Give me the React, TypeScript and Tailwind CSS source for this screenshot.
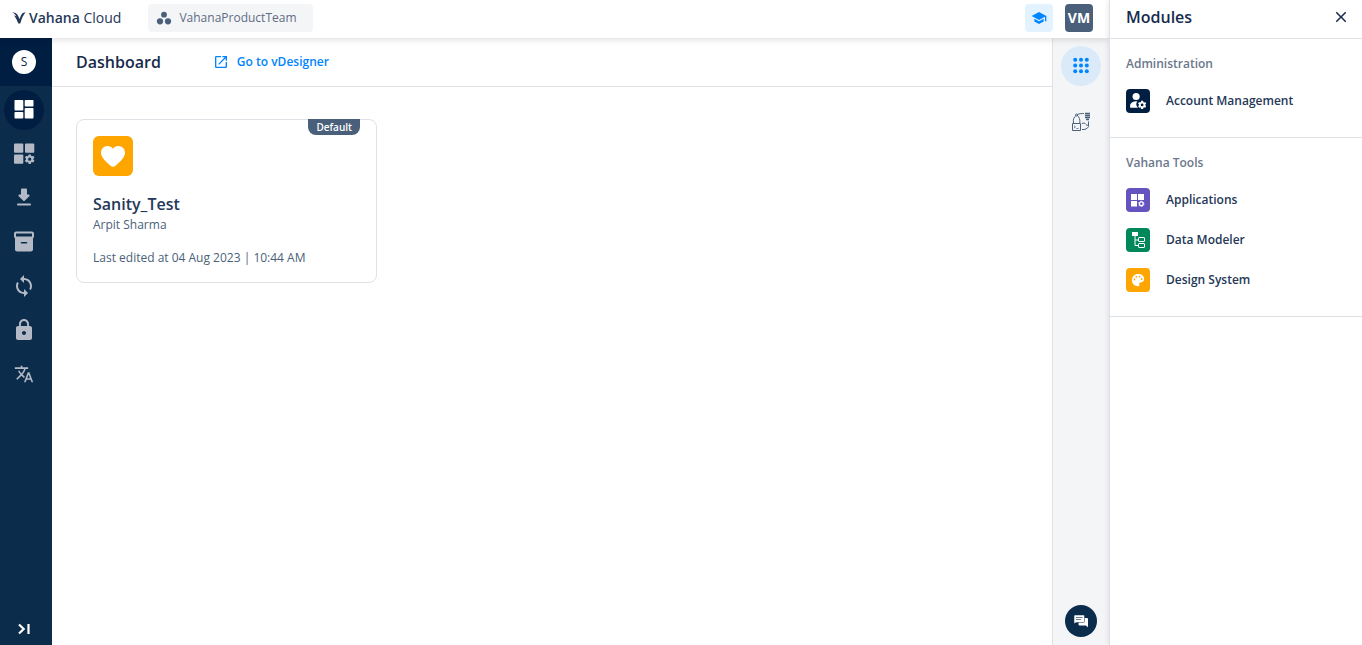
import React from "react";
import { MdClose, MdLock, MdOpenInNew, MdSchool, MdSync, MdTranslate } from "react-icons/md";

const gear =
  "M22.7 18.6l-1-.8a4 4 0 0 0 0-1.2l1-.8a.4.4 0 0 0 .1-.5l-1-1.7a.4.4 0 0 0-.5-.1l-1.2.5a4 4 0 0 0-1-.6l-.2-1.3a.4.4 0 0 0-.4-.3h-2a.4.4 0 0 0-.4.3l-.2 1.3a4 4 0 0 0-1 .6l-1.2-.5a.4.4 0 0 0-.5.1l-1 1.7a.4.4 0 0 0 .1.5l1 .8a4 4 0 0 0 0 1.2l-1 .8a.4.4 0 0 0-.1.5l1 1.7c.1.2.3.2.5.1l1.2-.5c.3.3.7.5 1 .6l.2 1.3c0 .2.2.3.4.3h2c.2 0 .4-.1.4-.3l.2-1.3c.4-.1.7-.3 1-.6l1.2.5c.2.1.4.1.5-.1l1-1.7a.4.4 0 0 0-.1-.5zM17.5 19a1.8 1.8 0 1 1 0-3.600 1.8 1.8 0 0 1 0 3.600z";

type IconProps = { className?: string };

function DashboardIcon({ className }: IconProps) {
  return (
    <svg viewBox="0 0 24 24" fill="currentColor" className={className} aria-hidden="true">
      <rect x="2.500" y="2" width="8.800" height="10.500" rx="0.800" />
      <rect x="12.700" y="2" width="8.800" height="6.500" rx="0.800" />
      <rect x="2.500" y="14" width="8.800" height="6.500" rx="0.800" />
      <rect x="12.700" y="10" width="8.800" height="10.500" rx="0.800" />
    </svg>
  );
}

function AppsGearIcon({ className }: IconProps) {
  return (
    <svg viewBox="0 0 24 24" fill="currentColor" className={className} aria-hidden="true">
      <rect x="2" y="1.500" width="9.300" height="9.300" rx="1" />
      <rect x="13" y="1.500" width="9.300" height="9.300" rx="1" />
      <rect x="2" y="12.500" width="9.300" height="9.300" rx="1" />
      <path fillRule="evenodd" d={gear} transform="translate(2.300 2) scale(0.88)" />
    </svg>
  );
}

function AppsTileIcon({ className }: IconProps) {
  return (
    <svg viewBox="0 0 16 16" fill="currentColor" className={className} aria-hidden="true">
      <path d="M1 2h6v6H1zM8 2h6v6H8zM1 9h6v5.500H1z" />
      <circle cx="11.300" cy="11.800" r="1.900" fill="none" stroke="currentColor" strokeWidth="1.300" />
      <circle cx="11.300" cy="11.800" r="2.700" fill="none" stroke="currentColor" strokeWidth="0.800" strokeDasharray="1.400 1.430" />
    </svg>
  );
}

function UserGearIcon({ className }: IconProps) {
  return (
    <svg viewBox="0 0 24 24" fill="currentColor" className={className} aria-hidden="true">
      <circle cx="9.500" cy="6" r="4.800" />
      <path d="M11 12.200c-5 0-9.500 2-9.500 5.600V21h10.500a7 7 0 0 1-1-8.800z" />
      <path fillRule="evenodd" d={gear} />
    </svg>
  );
}

function DownloadIcon({ className }: IconProps) {
  return (
    <svg viewBox="0 0 24 24" fill="currentColor" className={className} aria-hidden="true">
      <path d="M16.600 8.500H15V3.500a1 1 0 0 0-1-1h-4a1 1 0 0 0-1 1v5H7.400a1 1 0 0 0-.7 1.700l4.600 4.600a1 1 0 0 0 1.400 0l4.600-4.600a1 1 0 0 0-.7-1.700zM5 18.500a1 1 0 0 0 1 1h12a1 1 0 0 0 0-2H6a1 1 0 0 0-1 1z" />
    </svg>
  );
}

function ArchiveIcon({ className }: IconProps) {
  return (
    <svg viewBox="0 0 24 24" fill="currentColor" className={className} aria-hidden="true">
      <path
        fillRule="evenodd"
        d="M20 1.500H4c-1 0-2 .9-2 2v3c0 .7.4 1.300 1 1.700V19.500c0 1.100 1.100 2 2 2h14c.9 0 2-.9 2-2V8.200c.6-.4 1-1 1-1.700V3.500c0-1.100-1-2-2-2zm-5.500 12h-5a.8.8 0 0 1 0-1.600h5a.8.8 0 0 1 0 1.600zM20 6.500H4V3.500h16v3z"
      />
    </svg>
  );
}

function ExpandIcon({ className }: IconProps) {
  return (
    <svg viewBox="0 0 24 24" fill="none" stroke="currentColor" strokeWidth="2.200" className={className} aria-hidden="true">
      <path d="M7 7.500l4.700 4.500L7 16.500M16.500 7v10" />
    </svg>
  );
}

function LogoIcon({ className }: IconProps) {
  return (
    <svg viewBox="0 0 14 14" fill="currentColor" className={className} aria-hidden="true">
      <path d="M.3 1.300c2.200.2 4.200.7 5.300 2.600L7.700 8C8.400 5.500 9.200 3.300 10.200 2.400 11 1.700 12 1.400 13.600 1.200 11.300 3.800 9.600 7.500 8.300 12.600H6.300C5.300 9.800 3.800 7 2 4.300l2.400 1.200C3.200 3.500 2 2.300.3 1.300z" />
    </svg>
  );
}

function TeamIcon({ className }: IconProps) {
  return (
    <svg viewBox="0 0 16 16" fill="currentColor" className={className} aria-hidden="true">
      <circle cx="8" cy="4.700" r="2.900" />
      <circle cx="4" cy="11.300" r="3.100" />
      <circle cx="12" cy="11.300" r="3.100" />
    </svg>
  );
}

function DotsIcon({ className }: IconProps) {
  return (
    <svg viewBox="0 0 24 24" fill="currentColor" className={className} aria-hidden="true">
      {[5.700, 11.500, 17.300].map((cy) =>
        [6.200, 12, 17.800].map((cx) => <circle key={`${cx}-${cy}`} cx={cx} cy={cy} r="2" />),
      )}
    </svg>
  );
}

function HeartIcon({ className }: IconProps) {
  return (
    <svg viewBox="0 0 24 24" fill="currentColor" className={className} aria-hidden="true">
      <path d="M12 4.800C10.700 2.800 8.700 1.900 6.600 1.900 3 1.900 0 4.700 0 8.500c0 5.200 5.500 9.700 9.800 13.400 1.300 1.100 3.100 1.100 4.400 0C18.500 18.200 24 13.700 24 8.500c0-3.800-3-6.600-6.600-6.600-2.100 0-4.100.9-5.400 2.900z" />
    </svg>
  );
}

function PipelineIcon({ className }: IconProps) {
  return (
    <svg viewBox="0 0 20 20" fill="none" stroke="currentColor" strokeWidth="1" className={className} aria-hidden="true">
      <path d="M1.500 11.500h8v7h-8z" />
      <path d="M3 13.500l1.500 1.300L3 16.100M5.500 16.500h2" strokeWidth="0.800" />
      <path d="M2.500 11C1.800 7.500 3 5 5 3.500M8.800 11C9.300 7.500 8.200 5 6.300 3.500M6.500 2.500C8.500 1.500 11 1.500 13 1.500" />
      <circle cx="5.600" cy="3" r="1" />
      <path d="M14 1.500h5M14 3.500h5M14 5.500h5M15 7.500h3" strokeWidth="1.300" />
      <path d="M10.800 11.500c2-.8 3.200-.5 4 .8.900 1.200 2 1.200 3.200.2M17.500 9.500v4.500M11 17.500c3 .4 5.500-.8 6.800-3.200" />
    </svg>
  );
}

function TreeIcon({ className }: IconProps) {
  return (
    <svg viewBox="0 0 16 16" fill="none" stroke="currentColor" strokeWidth="1" className={className} aria-hidden="true">
      <rect x="2" y="0" width="6" height="4" fill="currentColor" stroke="none" />
      <path d="M5 4v9.500H8.500M5 8H8.500" />
      <rect x="8.500" y="5.500" width="6" height="4" rx="0.500" />
      <rect x="8.500" y="11.500" width="6" height="4" rx="0.500" />
    </svg>
  );
}

function PaletteIcon({ className }: IconProps) {
  return (
    <svg viewBox="0 0 16 16" fill="currentColor" className={className} aria-hidden="true">
      <path d="M8 1.900c3.500 0 6.200 2 6.200 4.900 0 2.200-1.500 3.600-3.500 3.600-1.500 0-1.700.7-1.400 1.800.3 1.200-.2 2.100-1.500 2.100-3.200 0-5.900-2.800-5.900-6.200C1.900 4.600 4.600 1.900 8 1.900z" />
      <g className="fill-[#ffa500]">
        <circle cx="4.500" cy="7.500" r="0.900" />
        <circle cx="6.300" cy="4.800" r="0.900" />
        <circle cx="9.500" cy="4.600" r="0.900" />
        <circle cx="11.700" cy="7" r="0.900" />
      </g>
    </svg>
  );
}

function ChatIcon({ className }: IconProps) {
  return (
    <svg viewBox="0 0 16 16" fill="currentColor" className={className} aria-hidden="true">
      <path d="M6 5h8a1 1 0 0 1 1 1v8.200L12.800 12.500H6.500a1 1 0 0 1-1-1z" />
      <path d="M2 2h8.500a1 1 0 0 1 1 1v5.500a1 1 0 0 1-1 1H3.500L1 10.500V3a1 1 0 0 1 1-1z" stroke="#0c2c4c" strokeWidth="0.500" />
      <path d="M3 4.500h6.500M3 6.500h5" stroke="#0c2c4c" strokeWidth="0.600" />
    </svg>
  );
}

const navItems = [
  { label: "Dashboard", icon: <DashboardIcon className="size-6" />, active: true },
  { label: "Applications", icon: <AppsGearIcon className="size-6" /> },
  { label: "Downloads", icon: <DownloadIcon className="size-6" /> },
  { label: "Archive", icon: <ArchiveIcon className="size-6" /> },
  { label: "Sync", icon: <MdSync className="size-6" /> },
  { label: "Security", icon: <MdLock className="size-6" /> },
  { label: "Languages", icon: <MdTranslate className="size-5" /> },
];

const sections = [
  {
    title: "Administration",
    items: [{ label: "Account Management", tile: "bg-[#001e42]", icon: <UserGearIcon className="size-[18px]" /> }],
  },
  {
    title: "Vahana Tools",
    items: [
      { label: "Applications", tile: "bg-[#6554c0]", icon: <AppsTileIcon className="size-4" /> },
      { label: "Data Modeler", tile: "bg-[#00875a]", icon: <TreeIcon className="size-4" /> },
      { label: "Design System", tile: "bg-[#ffa500]", icon: <PaletteIcon className="size-4" /> },
    ],
  },
];

function TopBar() {
  return (
    <header className="relative z-10 flex h-[38px] shrink-0 items-start bg-white pt-1 pr-4 pl-3 shadow-[0_2px_6px_rgba(0,0,0,0.12)]">
      <a href="#" className="flex h-7 items-center gap-[3px] text-[#253858]">
        <LogoIcon className="size-[14px]" />
        <span className="text-sm">
          <span className="font-semibold">Vahana</span> Cloud
        </span>
      </a>
      <button className="ml-[27px] flex h-7 items-center gap-[7px] rounded bg-[#f4f5f7] pr-4 pl-2 text-xs text-[#5e6c84]">
        <TeamIcon className="size-4 text-[#4a5f7a]" />
        VahanaProductTeam
      </button>
      <div className="ml-auto flex gap-3">
        <button aria-label="Learning" className="flex size-7 items-center justify-center rounded bg-[#e3f2ff] text-[#0085ff]">
          <MdSchool className="size-4" />
        </button>
        <button className="size-7 rounded bg-[#4a5f7a] text-sm leading-7 font-bold text-white">VM</button>
      </div>
    </header>
  );
}

function SideNav() {
  return (
    <nav aria-label="Main" className="flex w-[52px] shrink-0 flex-col bg-[#0c2c4c] text-[#b3bac5]">
      <div className="flex h-12 shrink-0 items-center bg-[#001e42] pl-3">
        <button className="size-6 rounded-full bg-white text-xs leading-6 font-medium text-[#091e42]">S</button>
      </div>
      <div className="flex flex-col gap-1 pt-1 pl-1">
        {navItems.map((item) => (
          <button
            key={item.label}
            aria-label={item.label}
            className={
              item.active
                ? "flex size-10 items-center justify-center rounded-full bg-[#001e42] text-white"
                : "flex size-10 items-center justify-center rounded-full"
            }
          >
            {item.icon}
          </button>
        ))}
      </div>
      <button aria-label="Expand navigation" className="mt-auto mb-1 ml-3 size-6 text-white">
        <ExpandIcon className="size-6" />
      </button>
    </nav>
  );
}

function ProjectCard() {
  return (
    <article className="relative w-[301px] rounded-lg border border-[#dfe1e6] p-4">
      <span className="absolute -top-px right-4 rounded-b-lg bg-[#4a5f7a] px-2 text-[10px] leading-4 font-semibold text-white">
        Default
      </span>
      <div className="flex size-10 items-center justify-center rounded-md bg-[#ffa500] text-white">
        <HeartIcon className="size-6" />
      </div>
      <h2 className="mt-4 text-base leading-6 font-semibold text-[#253858]">Sanity_Test</h2>
      <p className="text-xs leading-[18px] text-[#4a5f7a]">Arpit Sharma</p>
      <p className="mt-4 text-xs leading-4 text-[#4a5f7a]">Last edited at 04 Aug 2023 | 10:44 AM</p>
    </article>
  );
}

function ModulesPanel() {
  return (
    <aside className="z-20 w-[253px] shrink-0 border-l border-[#dfe1e6] bg-white shadow-[0_0_6px_rgba(0,0,0,0.12)]">
      <div className="flex h-[39px] items-center justify-between border-b border-[#dfe1e6] pr-3 pb-1 pl-4">
        <h2 className="text-base font-semibold text-[#172b4d]">Modules</h2>
        <button aria-label="Close" className="text-[#172b4d]">
          <MdClose className="size-[18px]" />
        </button>
      </div>
      {sections.map((section) => (
        <section key={section.title} className="border-b border-[#dfe1e6] px-4 pt-4 pb-4">
          <h3 className="text-xs leading-[18px] font-semibold text-[#6b778c]">{section.title}</h3>
          <ul className="pt-2">
            {section.items.map((item) => (
              <li key={item.label}>
                <a href="#" className="flex h-10 items-center gap-4 text-xs font-semibold text-[#253858]">
                  <span className={`flex size-6 items-center justify-center rounded text-white ${item.tile}`}>{item.icon}</span>
                  {item.label}
                </a>
              </li>
            ))}
          </ul>
        </section>
      ))}
    </aside>
  );
}

export default function App() {
  return (
    <div className="flex h-screen overflow-hidden bg-white font-['Open_Sans','Noto_Sans',sans-serif]">
      <div className="flex min-w-0 flex-1 flex-col">
        <TopBar />
        <div className="flex min-h-0 flex-1">
          <SideNav />
          <main className="min-w-0 flex-1">
            <div className="flex h-[49px] items-center gap-[52px] border-b border-[#dfe1e6] pl-6">
              <h1 className="text-base font-semibold text-[#172b4d]">Dashboard</h1>
              <a href="#" className="flex items-center gap-2 text-xs font-semibold text-[#0085ff]">
                <MdOpenInNew className="size-4" />
                Go to vDesigner
              </a>
            </div>
            <div className="px-6 py-8">
              <ProjectCard />
            </div>
          </main>
          <div className="flex w-[57px] shrink-0 flex-col items-center gap-4 border-l border-[#dfe1e6] bg-[#f4f5f7] py-2">
            <button aria-label="Modules" className="flex size-10 items-center justify-center rounded-full bg-[#dbeaf8] text-[#0085ff]">
              <DotsIcon className="size-6" />
            </button>
            <button aria-label="Pipelines" className="flex size-10 items-center justify-center text-[#4a5f7a]">
              <PipelineIcon className="size-5" />
            </button>
            <button aria-label="Chat" className="mt-auto flex size-8 items-center justify-center rounded-full bg-[#0c2c4c] text-white">
              <ChatIcon className="size-4" />
            </button>
          </div>
        </div>
      </div>
      <ModulesPanel />
    </div>
  );
}
